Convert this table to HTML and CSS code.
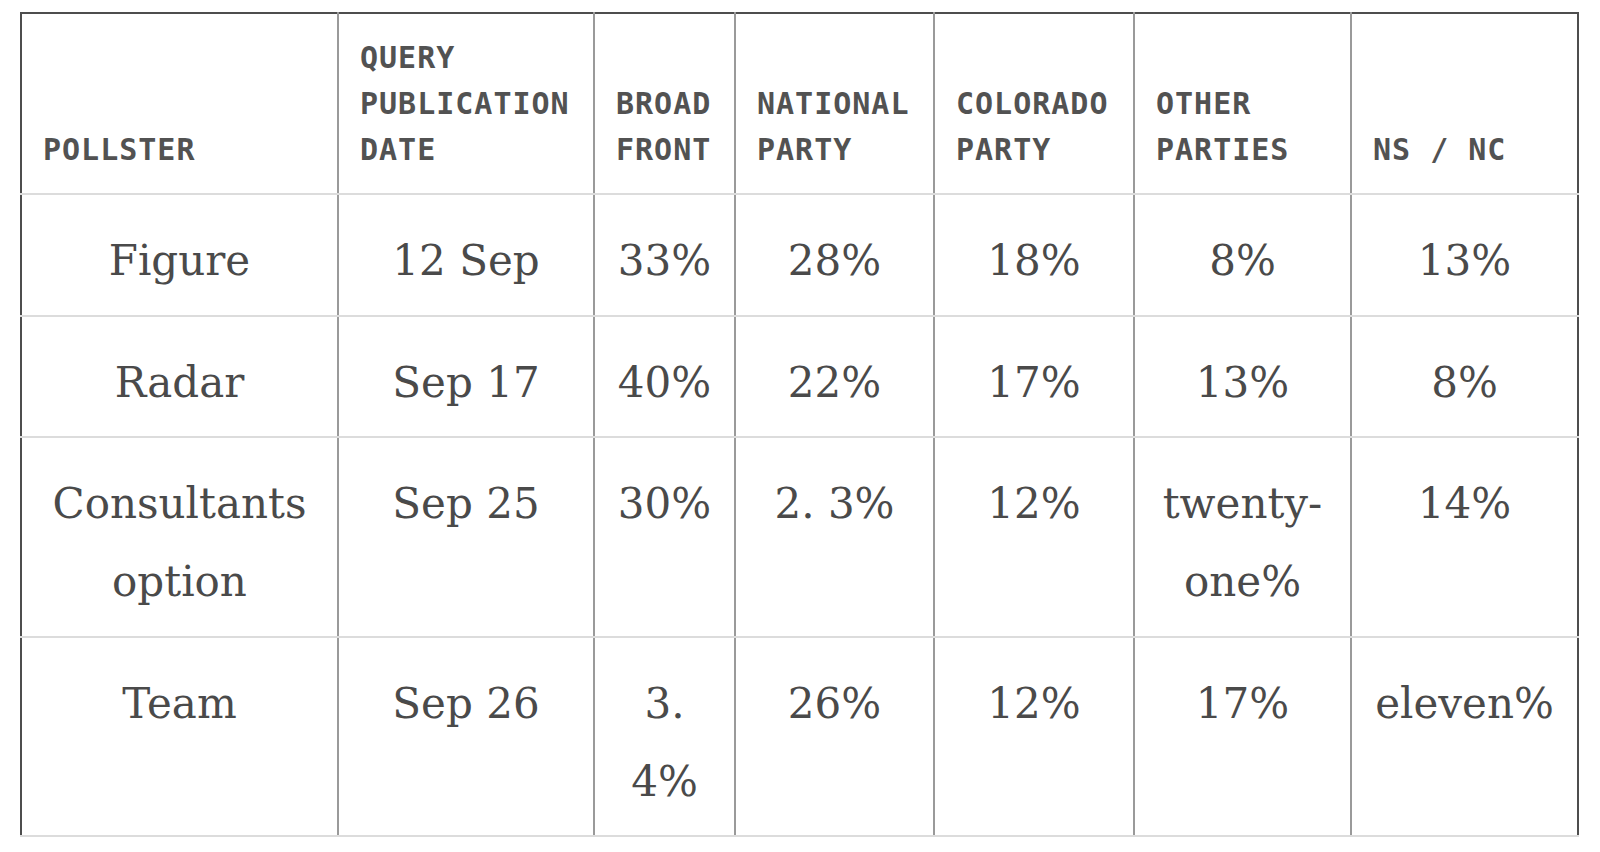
FILE: index.html
```html
<!DOCTYPE html>
<html lang="en">
<head>
<meta charset="utf-8">
<title>Polls</title>
<link rel="stylesheet" href="styles.css">
</head>
<body>
<div class="page">
  <table class="polls">
    <colgroup>
      <col class="c1"><col class="c2"><col class="c3"><col class="c4"><col class="c5"><col class="c6"><col class="c7">
    </colgroup>
    <thead>
      <tr>
        <th>POLLSTER</th>
        <th>QUERY PUBLICATION DATE</th>
        <th>BROAD FRONT</th>
        <th>NATIONAL PARTY</th>
        <th>COLORADO PARTY</th>
        <th>OTHER PARTIES</th>
        <th>NS / NC</th>
      </tr>
    </thead>
    <tbody>
      <tr>
        <td>Figure</td><td>12 Sep</td><td>33%</td><td>28%</td><td>18%</td><td>8%</td><td>13%</td>
      </tr>
      <tr>
        <td>Radar</td><td>Sep 17</td><td>40%</td><td>22%</td><td>17%</td><td>13%</td><td>8%</td>
      </tr>
      <tr>
        <td>Consultants option</td><td>Sep 25</td><td>30%</td><td>2. 3%</td><td>12%</td><td>twenty-one%</td><td>14%</td>
      </tr>
      <tr class="last">
        <td>Team</td><td>Sep 26</td><td>3. 4%</td><td>26%</td><td>12%</td><td>17%</td><td>eleven%</td>
      </tr>
    </tbody>
  </table>
</div>
</body>
</html>
```

FILE: styles.css
```css
html, body {
  margin: 0;
  padding: 0;
  background: #ffffff;
}

.page {
  padding: 12px 0 0 20px;
}

.polls {
  border-collapse: collapse;
  table-layout: fixed;
  width: 1557px;
  border-top: 2px solid #4e4e4e;
  border-left: 2px solid #4e4e4e;
  border-right: 2px solid #4e4e4e;
  color: #4a4a4a;
}

.c1 { width: 317px; }
.c2 { width: 256px; }
.c3 { width: 141px; }
.c4 { width: 199px; }
.c5 { width: 200px; }
.c6 { width: 217px; }
.c7 { width: 227px; }

.polls th,
.polls td {
  border-left: 2px solid #9a9a9a;
  border-bottom: 2px solid #dcdcdc;
  padding: 0 20px 0 21px;
}

.polls th:first-child,
.polls td:first-child {
  border-left: 2px solid #4e4e4e;
}

.polls th {
  font-family: "DejaVu Sans Mono", "Liberation Mono", monospace;
  font-weight: bold;
  font-size: 30px;
  letter-spacing: 1px;
  line-height: 46px;
  text-align: left;
  vertical-align: bottom;
  color: #525252;
  padding-top: 21px;
  padding-bottom: 20px;
}

.polls td {
  font-family: "DejaVu Serif", "Liberation Serif", serif;
  font-size: 42px;
  line-height: 78px;
  text-align: center;
  vertical-align: top;
  padding-top: 27px;
  padding-bottom: 14.6px;
  padding-left: 8px;
  padding-right: 8px;
}

.polls td:nth-child(3) {
  padding-left: 18px;
  padding-right: 18px;
}
```
